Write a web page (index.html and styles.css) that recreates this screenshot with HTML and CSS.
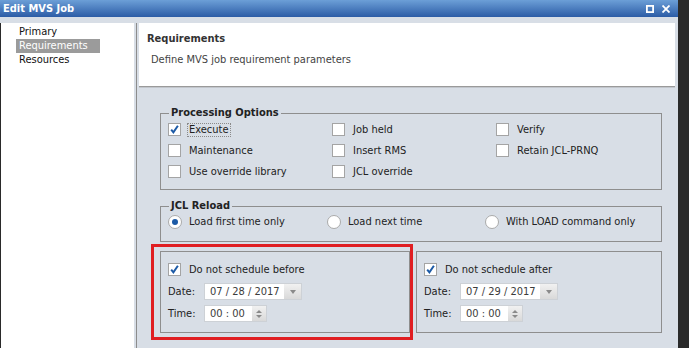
FILE: index.html
```html
<!DOCTYPE html>
<html lang="en">
<head>
	<meta charset="utf-8" />
	<title>Edit MVS Job</title>
	<link rel="stylesheet" href="styles.css">
</head>
<body>
	<div class="window">
		<div class="titlebar">
			<span class="title">Edit MVS Job</span>
			<span class="tb-icons">
				<svg width="8" height="8" viewBox="0 0 8 8"><rect x="0.9" y="0.9" width="6.2" height="6.2" fill="none" stroke="#fff" stroke-width="1.8"/></svg>
				<svg width="8" height="8" viewBox="0 0 8 8"><path d="M0.5 0.5 L7.5 7.5 M7.5 0.5 L0.5 7.5" stroke="#fff" stroke-width="1.8"/></svg>
			</span>
		</div>

		<div class="main">
			<ul class="nav">
				<li>Primary</li>
				<li class="active">Requirements</li>
				<li>Resources</li>
			</ul>
			<div class="splitter"></div>

			<div class="content">
				<div class="header">
					<h2>Requirements</h2>
					<p>Define MVS job requirement parameters</p>
				</div>

				<div class="form">
					<fieldset class="group">
						<legend>Processing Options</legend>
						<div class="options">
							<label class="opt"><span class="cb checked"></span><span class="focus">Execute</span></label>
							<label class="opt"><span class="cb"></span><span>Job held</span></label>
							<label class="opt"><span class="cb"></span><span>Verify</span></label>
							<label class="opt"><span class="cb"></span><span>Maintenance</span></label>
							<label class="opt"><span class="cb"></span><span>Insert RMS</span></label>
							<label class="opt"><span class="cb"></span><span>Retain JCL-PRNQ</span></label>
							<label class="opt"><span class="cb"></span><span>Use override library</span></label>
							<label class="opt"><span class="cb"></span><span>JCL override</span></label>
						</div>
					</fieldset>

					<fieldset class="group group-reload">
						<legend>JCL Reload</legend>
						<div class="radios">
							<label class="opt"><span class="rb checked"></span><span>Load first time only</span></label>
							<label class="opt"><span class="rb"></span><span>Load next time</span></label>
							<label class="opt"><span class="rb"></span><span>With LOAD command only</span></label>
						</div>
					</fieldset>

					<div class="sched-row">
						<div class="sched sched-before">
							<label class="opt"><span class="cb checked"></span><span>Do not schedule before</span></label>
							<div class="field">
								<span class="field-label">Date:</span>
								<span class="input date-input"><span class="val">07 / 28 / 2017</span><span class="drop"></span></span>
							</div>
							<div class="field">
								<span class="field-label">Time:</span>
								<span class="input time-input"><span class="val">00 : 00</span><span class="spin"><i class="up"></i><i class="down"></i></span></span>
							</div>
							<div class="annot"></div>
						</div>
						<div class="sched sched-after">
							<label class="opt"><span class="cb checked"></span><span>Do not schedule after</span></label>
							<div class="field">
								<span class="field-label">Date:</span>
								<span class="input date-input"><span class="val">07 / 29 / 2017</span><span class="drop"></span></span>
							</div>
							<div class="field">
								<span class="field-label">Time:</span>
								<span class="input time-input"><span class="val">00 : 00</span><span class="spin"><i class="up"></i><i class="down"></i></span></span>
							</div>
						</div>
					</div>
				</div>
			</div>
		</div>
	</div>
</body>
</html>
```

FILE: styles.css
```css
body {
	margin: 0;
	background-color: #2a2a2a;
	font-family: 'DejaVu Sans Condensed', 'DejaVu Sans', Verdana, sans-serif;
	font-stretch: condensed;
	font-size: 11px;
	color: #222;
}

.window {
	width: 678px;
	height: 348px;
	background-color: #d8dee6;
	display: flex;
	flex-direction: column;
	overflow: hidden;
}

/* Title bar */

.titlebar {
	height: 17px;
	flex: none;
	display: flex;
	align-items: center;
	justify-content: space-between;
	padding: 0 8px 0 3px;
	background-image: linear-gradient(to bottom, #6c9fd7, #2c5ca6);
	color: #fff;
}

.title {
	font-weight: bold;
	font-size: 11px;
}

.tb-icons {
	display: flex;
	gap: 8px;
}

.tb-icons svg {
	display: block;
}

/* Body */

.main {
	flex: 1;
	display: flex;
	padding-top: 6px;
	min-height: 0;
}

.nav {
	width: 133px;
	margin: 0;
	padding: 2px 0 0 0;
	list-style: none;
	background-color: #fff;
	border-left: 1px solid #2a2a2a;
	color: #111;
}

.nav li {
	width: 81px;
	margin-left: 15px;
	padding-left: 3px;
	line-height: 14px;
}

.nav li.active {
	background-color: #9b9b9b;
	color: #fff;
}

.splitter {
	width: 2px;
	border-right: 1px solid #8c8c8c;
}

.content {
	flex: 1;
	padding: 0 3px 0 2px;
}

.header {
	height: 64px;
	box-sizing: border-box;
	padding: 9px 8px 0 8px;
	background-color: #fff;
	border-bottom: 1px solid #9a9a9a;
	box-shadow: 0 1px 0 #c2c6cc;
}

.header h2 {
	margin: 0;
	font-size: 11px;
	line-height: 13px;
	font-weight: bold;
	color: #333;
}

.header p {
	margin: 8px 0 0 4px;
	line-height: 13px;
	color: #444;
}

/* Form */

.form {
	padding: 19px 13px 0 21px;
}

.group {
	margin: 0 0 9px 0;
	padding: 0 7px 7px 7px;
	border: 1px solid #8e8e8e;
	min-width: 0;
}

.group-reload {
	padding-bottom: 11px;
}

.group legend {
	margin-left: 1px;
	padding: 0 2px;
	font-weight: bold;
	line-height: 14px;
	color: #222;
}

.options {
	display: grid;
	grid-template-columns: 164px 164px 1fr;
	grid-auto-rows: 21px;
	align-items: center;
	margin-top: -1px;
}

.radios {
	display: grid;
	grid-template-columns: 159px 158px 1fr;
	height: 17px;
	align-items: center;
}

.opt {
	display: flex;
	align-items: center;
	gap: 8px;
	white-space: nowrap;
}

.focus {
	margin-left: -2px;
	padding: 0 1px;
	border: 1px dotted #8a8a8a;
	line-height: 12px;
}

.cb {
	width: 13px;
	height: 13px;
	box-sizing: border-box;
	flex: none;
	background-color: #fff;
	border: 1px solid #a4a4a4;
}

.cb.checked {
	background: #fff url("data:image/svg+xml,%3Csvg xmlns='http://www.w3.org/2000/svg' width='11' height='11' viewBox='0 0 11 11'%3E%3Cpath d='M2.2 5.6 L4.4 8.3 L8.9 1.8' fill='none' stroke='%231c5aa6' stroke-width='2'/%3E%3C/svg%3E") no-repeat center;
}

.rb {
	width: 14px;
	height: 14px;
	box-sizing: border-box;
	flex: none;
	border-radius: 50%;
	background-color: #fff;
	border: 1px solid #aaa;
	position: relative;
	margin-right: -1px;
}

.rb.checked::after {
	content: '';
	position: absolute;
	left: 3px;
	top: 3px;
	width: 6px;
	height: 6px;
	border-radius: 50%;
	background-color: #1c5aa6;
}

/* Schedule boxes */

.sched-row {
	display: flex;
	gap: 6px;
	margin-top: 6px;
}

.sched {
	position: relative;
	height: 82px;
	box-sizing: border-box;
	padding: 10px 7px 0 7px;
	border: 1px solid #8e8e8e;
}

.sched-before {
	width: 250px;
}

.sched-after {
	flex: 1;
}

.sched .opt {
	height: 14px;
	margin-bottom: 7px;
}

.field {
	display: flex;
	align-items: center;
	height: 17px;
	margin-bottom: 5px;
}

.field-label {
	width: 36px;
}

.input {
	height: 17px;
	box-sizing: border-box;
	display: flex;
	background-color: #fff;
	border: 1px solid #cdd1d6;
}

.input .val {
	flex: 1;
	padding-left: 5px;
	line-height: 15px;
	color: #3c3c3c;
}

.date-input {
	width: 98px;
}

.time-input {
	width: 63px;
}

.drop {
	width: 17px;
	display: flex;
	align-items: center;
	justify-content: center;
	background-image: linear-gradient(to bottom, #f1f1f1, #d9d9d9);
}

.drop::after {
	content: '';
	border-top: 4px solid #8a8a8a;
	border-left: 3.5px solid transparent;
	border-right: 3.5px solid transparent;
}

.spin {
	width: 14px;
	display: flex;
	flex-direction: column;
	align-items: center;
	justify-content: center;
	gap: 2px;
	background-image: linear-gradient(to bottom, #f1f1f1, #d9d9d9);
}

.spin i {
	display: block;
	border-left: 3px solid transparent;
	border-right: 3px solid transparent;
}

.spin .up {
	border-bottom: 3px solid #8a8a8a;
}

.spin .down {
	border-top: 3px solid #8a8a8a;
}

/* red annotation frame drawn over the first box */
.annot {
	position: absolute;
	left: -10px;
	top: -8px;
	right: -4px;
	bottom: -8px;
	border: 3px solid #e01e22;
	pointer-events: none;
}
```
